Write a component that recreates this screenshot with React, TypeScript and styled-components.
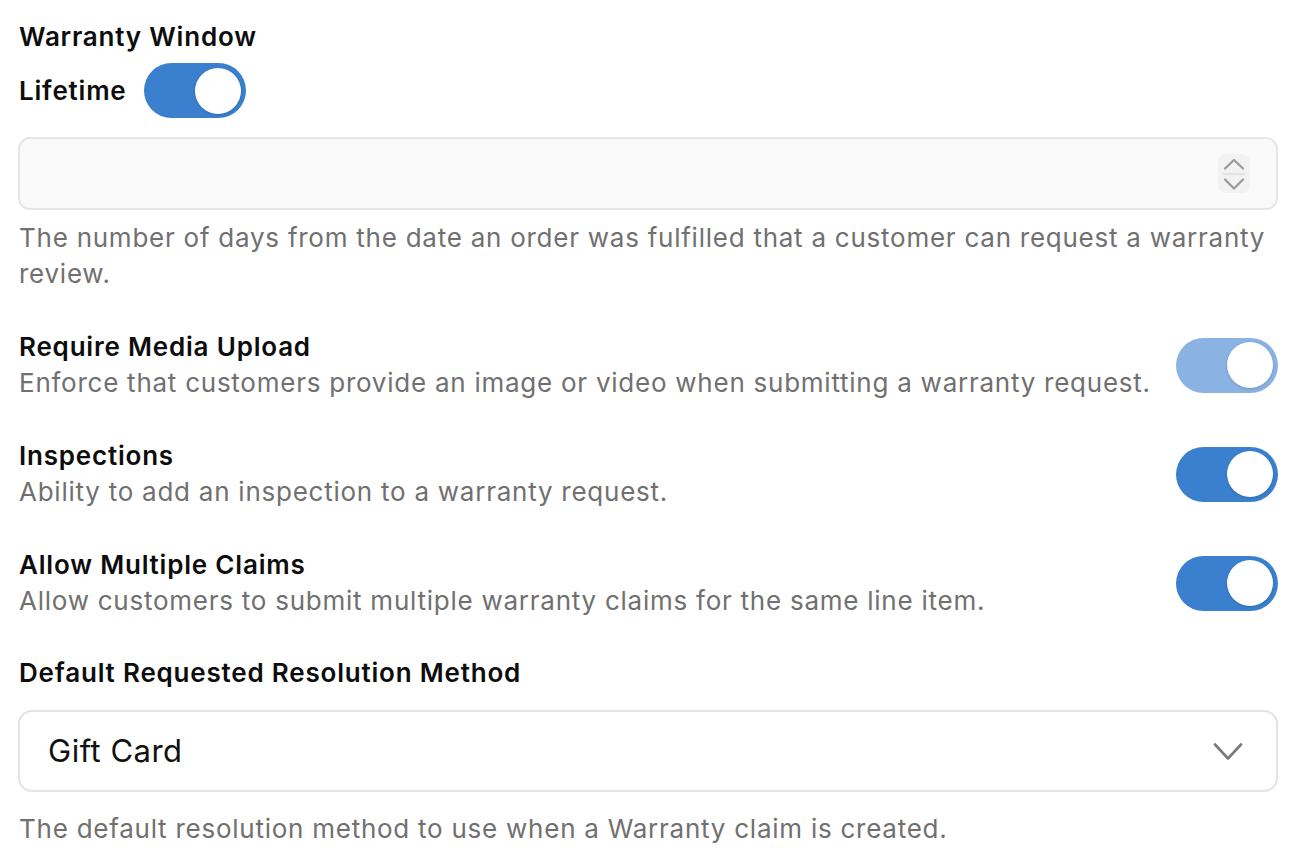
import styled, { createGlobalStyle } from 'styled-components';

const GlobalStyle = createGlobalStyle`
  html, body {
    margin: 0;
    padding: 0;
    background: #ffffff;
  }
  body {
    font-family: Inter, "Noto Sans", "Liberation Sans", sans-serif;
    color: #111111;
    -webkit-font-smoothing: antialiased;
  }
`;

const Page = styled.div`
  display: flex;
  flex-direction: column;
  padding: 19px 24px 0 18px;
  font-size: 26px;
  line-height: 36px;
  letter-spacing: 0.75px;
`;

const Label = styled.div`
  font-weight: 600;
  color: #0d0d0d;
  padding-left: 1px;
  letter-spacing: 0.8px;
`;

const Help = styled.div<{ $top?: number }>`
  color: #707070;
  margin-top: ${(p) => p.$top ?? 0}px;
  padding-left: 1px;
`;

const InlineToggle = styled.div`
  display: flex;
  align-items: center;
  gap: 17px;
  margin-top: 8px;
`;

const Track = styled.button<{ $muted?: boolean }>`
  flex: 0 0 102px;
  width: 102px;
  height: 55px;
  border: 0;
  margin: 0;
  padding: 0 5px 0 0;
  border-radius: 28px;
  background: ${(p) => (p.$muted ? '#8ab3e3' : '#3a80cf')};
  display: flex;
  align-items: center;
  justify-content: flex-end;
  cursor: pointer;
`;

const Knob = styled.span`
  width: 46px;
  height: 46px;
  border-radius: 50%;
  background: #ffffff;
  box-shadow: 0 1px 3px rgba(0, 0, 0, 0.18);
`;

const NumberField = styled.div`
  margin-top: 19px;
  height: 73px;
  box-sizing: border-box;
  border: 2px solid #e6e6e6;
  border-radius: 12px;
  background: #fafafa;
  display: flex;
  align-items: center;
  padding: 0 26px 0 28px;
`;

const NumberInput = styled.input`
  flex: 1;
  border: 0;
  background: transparent;
  outline: none;
  font: inherit;
  font-size: 30px;
  color: #111111;
  appearance: textfield;
`;

const Spinner = styled.div`
  width: 32px;
  height: 39px;
  border-radius: 8px;
  background: #f2f2f2;
  display: flex;
  flex-direction: column;
  align-items: center;
  justify-content: center;
  gap: 3px;
`;

const SpinDivider = styled.span`
  width: 22px;
  height: 2px;
  background: #e2e2e2;
`;

const SettingRow = styled.div`
  display: flex;
  align-items: center;
  justify-content: space-between;
  gap: 24px;
  margin-top: 37px;
`;

const SettingText = styled.div`
  display: flex;
  flex-direction: column;
`;

const SelectLabel = styled(Label)`
  margin-top: 36px;
`;

const SelectBox = styled.button`
  margin-top: 19px;
  height: 82px;
  box-sizing: border-box;
  border: 2px solid #e4e4e4;
  border-radius: 14px;
  background: #ffffff;
  display: flex;
  align-items: center;
  justify-content: space-between;
  padding: 0 33px 0 28px;
  font: inherit;
  font-size: 31px;
  letter-spacing: 0.5px;
  color: #111111;
  cursor: pointer;
  text-align: left;
`;

const Toggle = ({ muted }: { muted?: boolean }) => (
  <Track $muted={muted} role="switch" aria-checked="true">
    <Knob />
  </Track>
);

const ChevronUp = () => (
  <svg width="22" height="12" viewBox="0 0 22 12" fill="none">
    <path d="M2 10.5 L11 2 L20 10.5" stroke="#9a9a9a" strokeWidth="2.2" strokeLinecap="round" strokeLinejoin="round" />
  </svg>
);

const ChevronDown = ({ w = 22, h = 12, color = '#9a9a9a', sw = 2.2 }) => (
  <svg width={w} height={h} viewBox={`0 0 ${w} ${h}`} fill="none">
    <path
      d={`M2 1.5 L${w / 2} ${h - 1.5} L${w - 2} 1.5`}
      stroke={color}
      strokeWidth={sw}
      strokeLinecap="round"
      strokeLinejoin="round"
    />
  </svg>
);

const settings = [
  {
    title: 'Require Media Upload',
    text: 'Enforce that customers provide an image or video when submitting a warranty request.',
    muted: true,
  },
  {
    title: 'Inspections',
    text: 'Ability to add an inspection to a warranty request.',
  },
  {
    title: 'Allow Multiple Claims',
    text: 'Allow customers to submit multiple warranty claims for the same line item.',
  },
];

const App = () => {
  return (
    <>
      <GlobalStyle />
      <Page>
        <Label>Warranty Window</Label>
        <InlineToggle>
          <Label>Lifetime</Label>
          <Toggle />
        </InlineToggle>
        <NumberField>
          <NumberInput type="text" inputMode="numeric" />
          <Spinner>
            <ChevronUp />
            <SpinDivider />
            <ChevronDown />
          </Spinner>
        </NumberField>
        <Help $top={10}>
          The number of days from the date an order was fulfilled that a customer can request a warranty review.
        </Help>

        {settings.map((s) => (
          <SettingRow key={s.title}>
            <SettingText>
              <Label>{s.title}</Label>
              <Help>{s.text}</Help>
            </SettingText>
            <Toggle muted={s.muted} />
          </SettingRow>
        ))}

        <SelectLabel>Default Requested Resolution Method</SelectLabel>
        <SelectBox>
          <span>Gift Card</span>
          <ChevronDown w={30} h={17} color="#7a7a7a" sw={2.6} />
        </SelectBox>
        <Help $top={19}>The default resolution method to use when a Warranty claim is created.</Help>
      </Page>
    </>
  );
};

export default App;
